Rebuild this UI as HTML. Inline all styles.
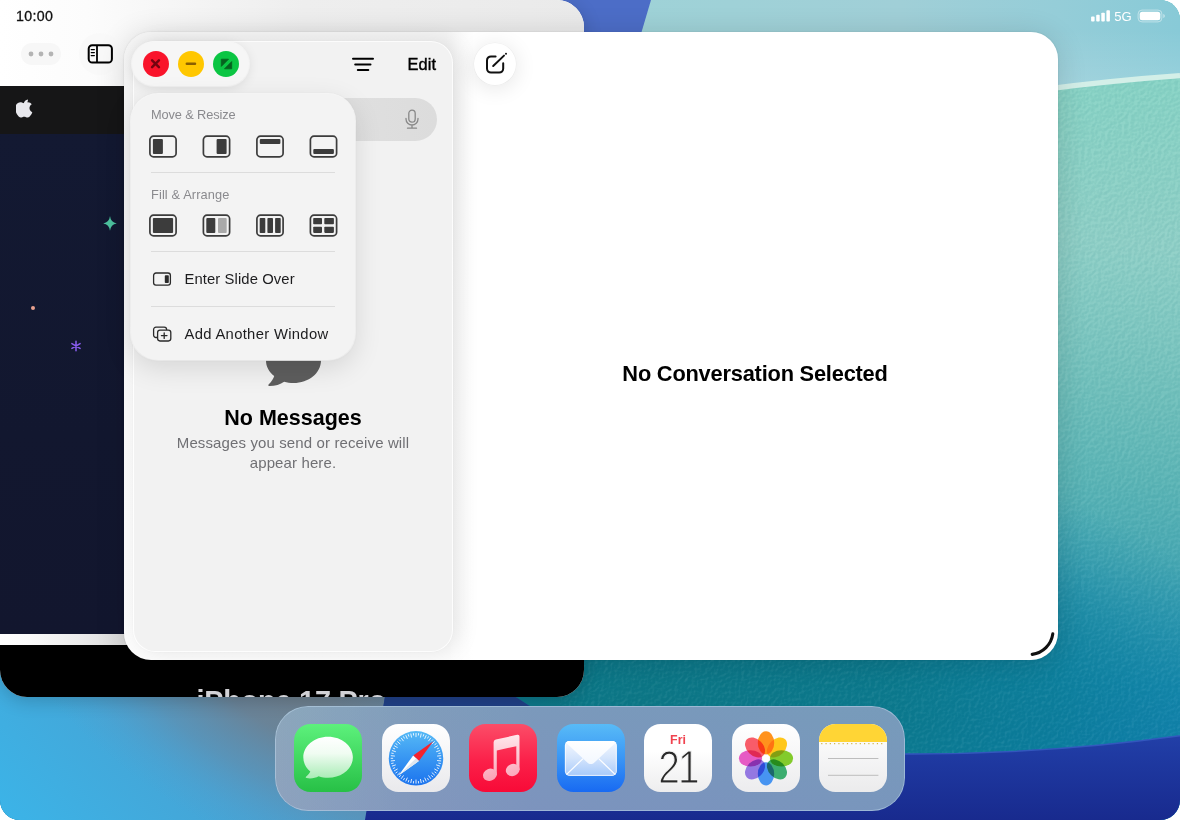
<!DOCTYPE html>
<html lang="en">
<head>
<meta charset="utf-8">
<title>iPad Window Controls</title>
<style>
*{box-sizing:border-box;margin:0;padding:0}
html,body{width:1180px;height:820px;overflow:hidden;background:#fff;font-family:"Liberation Sans",sans-serif;color:#000}
#screen{position:absolute;left:0;top:0;width:1180px;height:820px;overflow:hidden;border-radius:0 20px 20px 20px;background:#3a9fcf}
#wall{position:absolute;left:0;top:0;width:1180px;height:820px}
.abs{position:absolute}
/* status bar */
#time{position:absolute;left:16px;top:7px;font-size:14.200px;line-height:18px;font-weight:400;letter-spacing:.35px;color:#111;z-index:50;-webkit-text-stroke:.3px #111}
#status{position:absolute;left:1085px;top:0;width:90px;height:30px;z-index:50}
/* back window */
#back{position:absolute;left:0;top:0;width:584px;height:697px;border-radius:0 27px 27px 27px;overflow:hidden;background:#fff;box-shadow:0 4px 18px rgba(0,0,0,.18)}
#back .tb{position:absolute;left:0;top:0;width:584px;height:86px;background:linear-gradient(90deg,#fff 0%,#fcfcfc 15%,#f4f4f4 34%,#eeeeee 52%,#ececec 80%,#eaeaea 100%)}
#back .nav{position:absolute;left:0;top:86px;width:584px;height:48px;background:#161617}
#back .hero{position:absolute;left:0;top:134px;width:584px;height:500px;background:linear-gradient(180deg,#131932 0%,#12172f 60%,#12162e 100%)}
#back .strip{position:absolute;left:0;top:634px;width:584px;height:11px;background:linear-gradient(90deg,#fff 0,#fafafa 30px,#ececec 80px,#dadada 124px)}
#back .black{position:absolute;left:0;top:645px;width:584px;height:60px;background:#000}
#back .iph{position:absolute;left:196.500px;top:683.500px;line-height:34px;font-size:28.800px;font-weight:700;color:#d2d2d6;letter-spacing:-.2px;white-space:nowrap}
.pillbtn{position:absolute;background:#f4f4f4;border-radius:20px}
/* front window */
#front{position:absolute;left:124px;top:32px;width:934px;height:628px;border-radius:27px;background:linear-gradient(90deg,rgba(255,255,255,0) 0,rgba(255,255,255,0) 322px,#fff 350px),linear-gradient(180deg,#f3f3f3 0,#f5f5f5 120px,#fafafa 380px,#fcfcfc 100%);box-shadow:0 3px 30px rgba(0,0,0,.14),0 0 2px rgba(0,0,0,.12);z-index:10}
#side{position:absolute;left:10px;top:10px;width:318px;height:609px;border-radius:21px;background:#f2f2f2;box-shadow:0 0 0 1px rgba(255,255,255,.9),6px 0 22px rgba(0,0,0,.10),0 0 3px rgba(0,0,0,.06)}
#search{position:absolute;left:30px;top:55.500px;width:273px;height:43px;border-radius:21.500px;background:linear-gradient(90deg,#e6e6e6,#dcdcdc)}
#edit{position:absolute;left:273.500px;top:12px;font-size:16.400px;line-height:20px;font-weight:400;-webkit-text-stroke:.38px #000;color:#000;letter-spacing:.1px}
#nomsg{position:absolute;left:0;top:364px;line-height:24px;width:318px;text-align:center;font-size:21.500px;font-weight:700;color:#000;letter-spacing:0}
#sub{position:absolute;left:19px;top:391px;width:280px;text-align:center;font-size:15px;line-height:20px;color:#707074;letter-spacing:.12px}
#nosel{position:absolute;left:331px;top:329px;line-height:26px;width:600px;text-align:center;font-size:21.800px;font-weight:700;color:#000;letter-spacing:-.2px}
#compose{position:absolute;left:350px;top:11px;width:42px;height:42px;border-radius:21px;background:#fff;box-shadow:0 3px 22px rgba(0,0,0,.11),0 0 0 .5px rgba(0,0,0,.04)}
/* traffic lights + menu */
#lights{position:absolute;left:132px;top:42px;width:117px;height:44px;border-radius:22px;background:#f6f6f6;box-shadow:0 2px 12px rgba(0,0,0,.10),0 0 0 1px rgba(255,255,255,.8);z-index:30}
#lights i{position:absolute;top:8.800px;width:26px;height:26px;border-radius:50%}
#menu{position:absolute;left:131px;top:94px;width:224px;height:266px;border-radius:27px;background:#f3f3f3;box-shadow:0 8px 28px rgba(0,0,0,.12),0 0 0 1px rgba(255,255,255,.85),0 0 3px rgba(0,0,0,.08);z-index:30}
#menu .lab{position:absolute;left:20px;line-height:16px;font-size:12.800px;color:#8a8a8e;letter-spacing:-.2px;white-space:nowrap}
#menu .div{position:absolute;left:20px;width:184px;height:1px;background:#dcdcdc}
#menu .item{position:absolute;left:53.500px;line-height:20px;font-size:14.8px;color:#1c1c1e;letter-spacing:.1px;white-space:nowrap}
#menu svg.ic{position:absolute}
/* dock */
#dock{position:absolute;left:274.500px;top:705.500px;width:630.500px;height:105.500px;border-radius:33px;background:linear-gradient(180deg,rgba(116,162,184,.28) 0%,rgba(121,142,192,.28) 100%),linear-gradient(90deg,#95a9bd 0%,#8ea4be 10%,#859bbd 22%,#7e96bd 40%,#7a96bc 70%,#7999bb 100%);box-shadow:inset 0 0 0 1px rgba(200,225,245,.45);z-index:20}
.app{position:absolute;top:18.700px;width:68px;height:68px;border-radius:16.5px;overflow:hidden}
</style>
</head>
<body>
<div id="screen">
<svg id="wall" viewBox="0 0 1180 820">
  <defs>
    <linearGradient id="gTeal" gradientUnits="userSpaceOnUse" x1="1150" y1="80" x2="1090" y2="740">
      <stop offset="0" stop-color="#89d4c6"/>
      <stop offset=".12" stop-color="#8cd2c6"/>
      <stop offset=".25" stop-color="#90d0c7"/>
      <stop offset=".36" stop-color="#82c9c2"/>
      <stop offset=".485" stop-color="#6fbfbb"/>
      <stop offset=".605" stop-color="#5cb5b6"/>
      <stop offset=".727" stop-color="#47a8b3"/>
      <stop offset=".82" stop-color="#2e98b0"/>
      <stop offset=".91" stop-color="#1688ad"/>
      <stop offset="1" stop-color="#117eab"/>
    </linearGradient>
    <radialGradient id="gTealDark" gradientUnits="userSpaceOnUse" cx="640" cy="700" r="640" gradientTransform="translate(640 700) scale(1 .42) translate(-640 -700)">
      <stop offset="0" stop-color="#0d7786" stop-opacity="1"/>
      <stop offset=".4" stop-color="#0c798c" stop-opacity=".95"/>
      <stop offset=".65" stop-color="#0a7c96" stop-opacity=".7"/>
      <stop offset=".85" stop-color="#0c80a2" stop-opacity=".25"/>
      <stop offset="1" stop-color="#0f84aa" stop-opacity="0"/>
    </radialGradient>
    <linearGradient id="gSky" x1="0" y1="0" x2="1" y2="0">
      <stop offset="0" stop-color="#9ed3d7"/>
      <stop offset=".55" stop-color="#a0cfd7"/>
      <stop offset=".8" stop-color="#95cdd8"/>
      <stop offset="1" stop-color="#88cad7"/>
    </linearGradient>
    <linearGradient id="gSkyV" gradientUnits="userSpaceOnUse" x1="0" y1="30" x2="0" y2="88"><stop offset="0" stop-color="#fff" stop-opacity="0"/><stop offset="1" stop-color="#fff" stop-opacity=".14"/></linearGradient>
    <linearGradient id="gLeft" gradientUnits="userSpaceOnUse" x1="0" y1="820" x2="200" y2="640">
      <stop offset="0" stop-color="#3bb4e8"/>
      <stop offset=".5" stop-color="#43a8da"/>
      <stop offset="1" stop-color="#4c9ccc"/>
    </linearGradient>
    <radialGradient id="gShade" gradientUnits="userSpaceOnUse" cx="290" cy="680" r="330" gradientTransform="translate(290 680) rotate(28) scale(1 .5) translate(-290 -680)">
      <stop offset="0" stop-color="#6f7f8c" stop-opacity="1"/>
      <stop offset=".3" stop-color="#6b8295" stop-opacity=".95"/>
      <stop offset=".6" stop-color="#648ba8" stop-opacity=".6"/>
      <stop offset=".85" stop-color="#5b97c0" stop-opacity=".2"/>
      <stop offset="1" stop-color="#5a9cc8" stop-opacity="0"/>
    </radialGradient>
    <linearGradient id="gNavy" x1="0" y1="0" x2="0" y2="1">
      <stop offset="0" stop-color="#2a4db6"/>
      <stop offset=".5" stop-color="#1f3aa2"/>
      <stop offset="1" stop-color="#182a8e"/>
    </linearGradient>
    <linearGradient id="gBand" x1="0" y1="0" x2="0" y2="1">
      <stop offset="0" stop-color="#4b6ac8"/>
      <stop offset="1" stop-color="#1f3f86"/>
    </linearGradient>
    <filter id="grain" x="0" y="0" width="100%" height="100%">
      <feTurbulence type="fractalNoise" baseFrequency=".3" numOctaves="2" seed="4" result="n"/>
      <feDiffuseLighting in="n" surfaceScale="1.100" diffuseConstant="1" lighting-color="#fff" result="l"><feDistantLight azimuth="225" elevation="58"/></feDiffuseLighting>
      <feColorMatrix in="l" type="matrix" values="0 0 0 0 1  0 0 0 0 1  0 0 0 0 1  -1.600 0 0 0 1.420"/>
    </filter>
    <filter id="grainD" x="0" y="0" width="100%" height="100%">
      <feTurbulence type="fractalNoise" baseFrequency=".3" numOctaves="2" seed="4" result="n"/>
      <feDiffuseLighting in="n" surfaceScale="1.100" diffuseConstant="1" lighting-color="#fff" result="l"><feDistantLight azimuth="225" elevation="58"/></feDiffuseLighting>
      <feColorMatrix in="l" type="matrix" values="0 0 0 0 0  0 0 0 0 0.100  0 0 0 0 0.150  1.600 0 0 0 -1.240"/>
    </filter>
  </defs>
  <rect width="1180" height="820" fill="url(#gTeal)"/>
  <rect x="0" y="400" width="1180" height="420" fill="url(#gTealDark)"/>
  <!-- paper texture on teal area -->
  <rect x="560" y="60" width="620" height="700" filter="url(#grain)" opacity=".13"/>
  <rect x="560" y="60" width="620" height="700" filter="url(#grainD)" opacity=".2"/>
  <!-- lower-left blue -->
  <path d="M0 600H400V820H0Z" fill="url(#gLeft)"/>
  <path d="M0 600H400V820H0Z" fill="url(#gShade)"/>
  <!-- sky -->
  <path d="M560 0H1180V75.700Q1112 80.500 1040 89.900L560 120Z" fill="url(#gSky)"/>
  <path d="M1040 30H1180V75.700Q1112 80.500 1040 89.900Z" fill="url(#gSkyV)"/>
  <path d="M1040 89.900Q1112 80.500 1180 75.700" stroke="#d3efe8" stroke-width="5.200" fill="none"/>
  <!-- blue band -->
  <path d="M560 0H651L638 44H560Z" fill="#4c6dc7"/>
  <!-- navy bottom -->
  <path d="M365 820L386 690H505L545 716Q700 762 905 753.400Q1045 754 1180 735.300V820Z" fill="url(#gNavy)"/>
  <path d="M378 740L386 690H505L545 716V740Z" fill="#1f3f82" opacity=".9"/>
  <path d="M905 753.900Q1045 754.500 1180 735.800" stroke="#3b62c8" stroke-width="1.500" fill="none" opacity=".7"/>
</svg>

<!-- ===== back window (Safari / Apple site) ===== -->
<div id="back">
  <div class="tb"></div>
  <div class="nav"></div>
  <div class="hero"></div>
  <div class="strip"></div>
  <div class="black"></div>
  <div class="iph">iPhone 17 Pro</div>
  <!-- ellipsis pill -->
  <div class="pillbtn" style="left:21px;top:43px;width:40px;height:22px;border-radius:11px;background:#f7f7f7"></div>
  <svg class="abs" style="left:21px;top:43px" width="40" height="22" viewBox="0 0 40 22"><circle cx="10" cy="11" r="2.4" fill="#b4b4b4"/><circle cx="20" cy="11" r="2.4" fill="#b4b4b4"/><circle cx="30" cy="11" r="2.4" fill="#b4b4b4"/></svg>
  <!-- sidebar button -->
  <div class="pillbtn" style="left:79px;top:33px;width:42px;height:42px;border-radius:21px;background:#f9f9f9"></div>
  <svg class="abs" style="left:86px;top:42px" width="28" height="24" viewBox="0 0 28 24"><rect x="2.7" y="3.2" width="23.2" height="17.4" rx="3.6" fill="none" stroke="#000" stroke-width="2"/><path d="M11 3.2V20.6" stroke="#000" stroke-width="1.8"/><path d="M5.2 7.6H8.4M5.2 10.6H8.4M5.2 13.6H8.4" stroke="#000" stroke-width="1.2" stroke-linecap="round"/></svg>
  <!-- apple logo -->
  <svg class="abs" style="left:16px;top:98.5px" width="18" height="22" viewBox="0 0 170 200"><path fill="#e8e8ed" d="M150.4 130.3c-2.8 6.5-6.2 12.500-10.200 18-5.400 7.600-9.800 12.900-13.200 15.800-5.200 4.800-10.900 7.300-16.900 7.400-4.300 0-9.600-1.200-15.700-3.700-6.100-2.500-11.800-3.700-16.900-3.700-5.400 0-11.200 1.200-17.400 3.700-6.200 2.500-11.200 3.800-15 3.900-5.800.2-11.600-2.300-17.300-7.600-3.700-3.200-8.300-8.700-13.800-16.500-5.900-8.300-10.800-18-14.600-29-4.100-11.900-6.100-23.400-6.100-34.500 0-12.800 2.800-23.800 8.300-33 4.300-7.400 10.100-13.300 17.300-17.600 7.200-4.300 15-6.500 23.400-6.600 4.600 0 10.600 1.400 18.100 4.200 7.500 2.800 12.300 4.200 14.400 4.200 1.600 0 6.900-1.700 16-5 8.600-3.100 15.800-4.400 21.800-3.900 16.100 1.300 28.200 7.600 36.200 19.100-14.400 8.700-21.500 20.900-21.400 36.600.1 12.200 4.600 22.300 13.200 30.400 3.900 3.700 8.300 6.600 13.200 8.600-1.100 3.100-2.200 6-3.400 8.900zM113.500 3.900c0 9.600-3.500 18.500-10.500 26.800-8.400 9.900-18.600 15.600-29.700 14.700-.1-1.100-.2-2.400-.2-3.600 0-9.200 4-19 11.100-27.100 3.500-4.100 8-7.500 13.500-10.200C103.100 1.900 108.300.4 113.300.1c.1 1.300.2 2.600.2 3.800z"/></svg>
  <!-- stars -->
  <svg class="abs" style="left:101.800px;top:215px" width="16" height="17" viewBox="0 0 16 17"><path d="M8 1Q8.700 7.400 14.800 8.400Q8.700 9.400 8 15.800Q7.300 9.400 1.200 8.400Q7.300 7.400 8 1Z" fill="#4ec4a1"/></svg>
  <div class="abs" style="left:30.700px;top:305.600px;width:4.400px;height:4.400px;border-radius:2.200px;background:#e9a18f"></div>
  <svg class="abs" style="left:70.300px;top:339.900px" width="12" height="12" viewBox="0 0 12 12"><path d="M6 1.300V10.700M1.900 3.650L10.100 8.350M1.900 8.350L10.100 3.650" stroke="#8a5df0" stroke-width="1.500" stroke-linecap="round"/></svg>
</div>

<!-- ===== front window (Messages) ===== -->
<div id="front">
  <div id="side">
    <!-- filter icon -->
    <svg class="abs" style="left:216px;top:11px" width="26" height="22" viewBox="0 0 26 22"><path d="M3 5.800H23M5.200 11.400H20.500M7.800 17H18.300" stroke="#000" stroke-width="2" stroke-linecap="round"/></svg>
    <div id="edit">Edit</div>
    <div id="search"></div>
    <!-- mic -->
    <svg class="abs" style="left:268px;top:66px" width="20" height="22" viewBox="0 0 20 22"><rect x="6.800" y="2.200" width="6.400" height="12" rx="3.200" fill="none" stroke="#888" stroke-width="1.300"/><path d="M4 10.400v.6a6 6 0 0 0 12 0v-.6M10 17v3M5.500 20.200h9" fill="none" stroke="#888" stroke-width="1.300" stroke-linecap="round"/></svg>
    <!-- bubble -->
    <svg class="abs" style="left:130px;top:294px" width="58" height="52" viewBox="0 0 58 52"><path d="M29.500 2C44.700 2 57 11.800 57 24.500S44.700 47 29.500 47c-3.300 0-6.500-.5-9.400-1.300C16.500 48.500 11 50 5.500 50c-1.200 0-1.500-1-.7-1.800C7.600 45.600 9.500 42.500 10.200 40 5 36 2 30.600 2 24.500 2 11.800 14.300 2 29.500 2Z" fill="#5e5e5e"/></svg>
    <div id="nomsg">No Messages</div>
    <div id="sub">Messages you send or receive will appear here.</div>
  </div>
  <div id="compose">
    <svg class="abs" style="left:8px;top:7px" width="28" height="28" viewBox="0 0 28 28"><path d="M13.600 6.400H9A4 4 0 0 0 5 10.400V18.600A4 4 0 0 0 9 22.600H17.200A4 4 0 0 0 21.200 18.600V13.200" fill="none" stroke="#111" stroke-width="2" stroke-linecap="round"/><path d="M11.200 16L22 5.600" stroke="#111" stroke-width="2" stroke-linecap="round"/><circle cx="24" cy="3.700" r="1" fill="#111"/></svg>
  </div>
  <div id="nosel">No Conversation Selected</div>
  <!-- resize handle -->
  <svg class="abs" style="left:900px;top:596px" width="34" height="32" viewBox="0 0 34 32"><path d="M8.200 26.400A24 24 0 0 0 28.800 5.900" fill="none" stroke="#111" stroke-width="3.100" stroke-linecap="round"/></svg>
</div>

<!-- ===== traffic lights ===== -->
<div id="lights">
  <i style="left:10.500px;background:#f9142b"></i>
  <i style="left:45.800px;background:#ffc700"></i>
  <i style="left:81.400px;background:#0bc543"></i>
  <svg class="abs" style="left:0;top:0" width="117" height="44" viewBox="0 0 117 44">
    <path d="M20.100 18.400l6.800 6.800M26.900 18.400l-6.800 6.800" stroke="#740410" stroke-width="2.500" stroke-linecap="round"/>
    <path d="M54.800 21.800h8.200" stroke="#8a5f00" stroke-width="2.500" stroke-linecap="round"/>
    <path d="M89.300 17.200h7.200l-7.200 7.200zM99.700 26.800h-7.200l7.200-7.200z" fill="#06621f" stroke="#06621f" stroke-width=".8" stroke-linejoin="round"/>
  </svg>
</div>

<!-- ===== window menu ===== -->
<div id="menu">
  <div class="lab" style="top:13.400px;letter-spacing:-.12px">Move &amp; Resize</div>
  <svg class="ic" style="left:17px;top:40px" width="190" height="26" viewBox="0 0 190 26">
    <g fill="none" stroke="#3c3c3c" stroke-width="1.700">
      <rect x="1.900" y="2.200" width="26.200" height="20.600" rx="3.600"/>
      <rect x="55.400" y="2.200" width="26.200" height="20.600" rx="3.600"/>
      <rect x="108.900" y="2.200" width="26.200" height="20.600" rx="3.600"/>
      <rect x="162.400" y="2.200" width="26.200" height="20.600" rx="3.600"/>
    </g>
    <g fill="#3c3c3c">
      <rect x="4.900" y="5" width="10" height="15" rx="1"/>
      <rect x="68.600" y="5" width="10" height="15" rx="1"/>
      <rect x="111.800" y="5" width="20.600" height="5" rx="1"/>
      <rect x="165.300" y="15" width="20.600" height="5" rx="1"/>
    </g>
  </svg>
  <div class="div" style="top:78px"></div>
  <div class="lab" style="top:92.700px;letter-spacing:.12px">Fill &amp; Arrange</div>
  <svg class="ic" style="left:17px;top:119px" width="190" height="26" viewBox="0 0 190 26">
    <g fill="none" stroke="#3c3c3c" stroke-width="1.700">
      <rect x="1.900" y="2.200" width="26.200" height="20.600" rx="3.600"/>
      <rect x="55.400" y="2.200" width="26.200" height="20.600" rx="3.600"/>
      <rect x="108.900" y="2.200" width="26.200" height="20.600" rx="3.600"/>
      <rect x="162.400" y="2.200" width="26.200" height="20.600" rx="3.600"/>
    </g>
    <g fill="#3c3c3c">
      <rect x="4.900" y="5" width="20.200" height="15" rx="1"/>
      <rect x="58.300" y="5" width="9" height="15" rx="1"/>
      <rect x="70" y="5" width="8.700" height="15" rx="1" fill="#a9a9a9"/>
      <rect x="111.700" y="5" width="5.600" height="15" rx=".8"/>
      <rect x="119.400" y="5" width="5.600" height="15" rx=".8"/>
      <rect x="127.100" y="5" width="5.600" height="15" rx=".8"/>
      <rect x="165.200" y="5" width="8.800" height="6.200" rx=".8"/>
      <rect x="176.300" y="5" width="9.600" height="6.200" rx=".8"/>
      <rect x="165.200" y="13.700" width="8.800" height="6.200" rx=".8"/>
      <rect x="176.300" y="13.700" width="9.600" height="6.200" rx=".8"/>
    </g>
  </svg>
  <div class="div" style="top:157px"></div>
  <svg class="ic" style="left:20px;top:176px" width="22" height="18" viewBox="0 0 22 18"><rect x="2.600" y="3" width="16.800" height="12.200" rx="2.400" fill="none" stroke="#2a2a2a" stroke-width="1.300"/><rect x="13.800" y="5.200" width="4" height="7.800" rx=".8" fill="#2a2a2a"/></svg>
  <div class="item" style="top:174.900px">Enter Slide Over</div>
  <div class="div" style="top:212px"></div>
  <svg class="ic" style="left:20px;top:230px" width="22" height="20" viewBox="0 0 22 20"><path d="M6.200 13.500H5A2.400 2.400 0 0 1 2.600 11.100V5.600A2.400 2.400 0 0 1 5 3.200H13.200A2.400 2.400 0 0 1 15.600 5.600V6" fill="none" stroke="#2a2a2a" stroke-width="1.300"/><rect x="6.600" y="6.200" width="13.200" height="10.800" rx="2.400" fill="none" stroke="#2a2a2a" stroke-width="1.300"/><path d="M13.200 8.800v5.600M10.400 11.600H16" stroke="#2a2a2a" stroke-width="1.300" stroke-linecap="round"/></svg>
  <div class="item" style="top:230.200px;letter-spacing:.32px">Add Another Window</div>
</div>

<!-- ===== status bar ===== -->
<div id="time">10:00</div>
<svg id="status" viewBox="1085 0 90 30">
  <g fill="#fff">
    <rect x="1091.100" y="16.600" width="3.500" height="4.800" rx=".9"/>
    <rect x="1096.200" y="14.800" width="3.500" height="6.600" rx=".9"/>
    <rect x="1101.300" y="12.700" width="3.500" height="8.700" rx=".9"/>
    <rect x="1106.400" y="10.200" width="3.500" height="11.200" rx=".9"/>
  </g>
  <text x="1114.300" y="20.900" font-family="Liberation Sans, sans-serif" font-size="13.100" fill="#fff">5G</text>
  <rect x="1138.100" y="10.100" width="23.800" height="11.800" rx="3.900" fill="none" stroke="#fff" stroke-opacity=".45" stroke-width="1"/>
  <rect x="1139.700" y="11.700" width="20.600" height="8.600" rx="2.500" fill="#fff"/>
  <path d="M1163.300 14v4c.9-.3 1.500-1.100 1.500-2s-.6-1.700-1.500-2z" fill="#fff" fill-opacity=".5"/>
</svg>

<!-- ===== dock ===== -->
<div id="dock">
  <!-- Messages -->
  <div class="app" style="left:19.500px"><svg width="68" height="68" viewBox="0 0 68 68"><defs><linearGradient id="mg" x1="0" y1="0" x2="0" y2="1"><stop offset="0" stop-color="#5df17c"/><stop offset="1" stop-color="#27c046"/></linearGradient><linearGradient id="mb" x1="0" y1="0" x2="0" y2="1"><stop offset="0" stop-color="#fff"/><stop offset=".4" stop-color="#f0fcf2"/><stop offset="1" stop-color="#a9ecb6"/></linearGradient></defs><rect width="68" height="68" fill="url(#mg)"/><path d="M34.100 12.800C47.800 12.800 58.900 22 58.900 33.300S47.800 53.800 34.100 53.800C30.700 53.800 27.500 53.300 24.600 52.300 21.400 54.200 16.800 54.800 12.600 54.100 11.500 53.900 11.400 53.100 12.200 52.500 14.200 51 15.600 49.400 16.300 47.600 11.900 43.900 9.300 38.900 9.300 33.300 9.300 22 20.400 12.800 34.100 12.800Z" fill="url(#mb)"/></svg></div>
  <!-- Safari -->
  <div class="app" style="left:107px"><svg width="68" height="68" viewBox="0 0 68 68"><defs><linearGradient id="sg" x1="0" y1="0" x2="0" y2="1"><stop offset="0" stop-color="#fff"/><stop offset="1" stop-color="#e9e9ec"/></linearGradient><linearGradient id="sb" x1="0" y1="0" x2="0" y2="1"><stop offset="0" stop-color="#55b9f6"/><stop offset="1" stop-color="#1b73ee"/></linearGradient></defs><rect width="68" height="68" fill="url(#sg)"/><circle cx="34" cy="34.300" r="27.200" fill="url(#sb)"/><path d="M34.00 13.10L34.00 9.00M36.39 11.53L36.64 9.14M38.41 13.56L39.26 9.55M41.08 12.52L41.82 10.24M42.62 14.93L44.29 11.19M45.45 14.47L46.65 12.39M46.46 17.15L48.87 13.83M49.32 17.28L50.93 15.50M49.75 20.11L52.80 17.37M52.53 20.84L54.47 19.43M52.36 23.70L55.91 21.65M54.92 24.99L57.11 24.01M54.16 27.75L58.06 26.48M56.40 29.54L58.75 29.04M55.08 32.08L59.16 31.66M56.90 34.30L59.30 34.30M55.08 36.52L59.16 36.94M56.40 39.06L58.75 39.56M54.16 40.85L58.06 42.12M54.92 43.61L57.11 44.59M52.36 44.90L55.91 46.95M52.53 47.76L54.47 49.17M49.75 48.49L52.80 51.23M49.32 51.32L50.93 53.10M46.46 51.45L48.87 54.77M45.45 54.13L46.65 56.21M42.62 53.67L44.29 57.41M41.08 56.08L41.82 58.36M38.41 55.04L39.26 59.05M36.39 57.07L36.64 59.46M34.00 55.50L34.00 59.60M31.61 57.07L31.36 59.46M29.59 55.04L28.74 59.05M26.92 56.08L26.18 58.36M25.38 53.67L23.71 57.41M22.55 54.13L21.35 56.21M21.54 51.45L19.13 54.77M18.68 51.32L17.07 53.10M18.25 48.49L15.20 51.23M15.47 47.76L13.53 49.17M15.64 44.90L12.09 46.95M13.08 43.61L10.89 44.59M13.84 40.85L9.94 42.12M11.60 39.06L9.25 39.56M12.92 36.52L8.84 36.94M11.10 34.30L8.70 34.30M12.92 32.08L8.84 31.66M11.60 29.54L9.25 29.04M13.84 27.75L9.94 26.48M13.08 24.99L10.89 24.01M15.64 23.70L12.09 21.65M15.47 20.84L13.53 19.43M18.25 20.11L15.20 17.37M18.68 17.28L17.07 15.50M21.54 17.15L19.13 13.83M22.55 14.47L21.35 12.39M25.38 14.93L23.71 11.19M26.92 12.52L26.18 10.24M29.59 13.56L28.74 9.55M31.61 11.53L31.36 9.14" stroke="#fff" stroke-width="1" stroke-opacity=".85"/><path d="M51.300 17.200L31.200 31.400 36.900 37.100Z" fill="#f5222d"/><path d="M16.600 51.400L31.200 31.400 36.900 37.100Z" fill="#fff"/><path d="M16.600 51.400L34 34.300 36.900 37.100Z" fill="#dfe6ef"/></svg></div>
  <!-- Music -->
  <div class="app" style="left:194.500px"><svg width="68" height="68" viewBox="0 0 68 68"><defs><linearGradient id="ug" x1="0" y1="0" x2="0" y2="1"><stop offset="0" stop-color="#fb4d68"/><stop offset=".55" stop-color="#fb2049"/><stop offset="1" stop-color="#f80a37"/></linearGradient><linearGradient id="un" gradientUnits="userSpaceOnUse" x1="0" y1="10" x2="0" y2="58"><stop offset="0" stop-color="#ffe9ed"/><stop offset="1" stop-color="#fba0b4"/></linearGradient></defs><rect width="68" height="68" fill="url(#ug)"/><g fill="url(#un)"><path d="M24.600 18.200Q24.600 16 26.800 15.500L48.200 10.800Q50.500 10.300 50.500 12.600V46H47.300V22.300L27.800 26.400V51H24.600Z"/><ellipse cx="20.900" cy="50.800" rx="7.100" ry="6" transform="rotate(-22 20.900 50.800)"/><ellipse cx="43.700" cy="46" rx="7" ry="6" transform="rotate(-22 43.700 46)"/></g></svg></div>
  <!-- Mail -->
  <div class="app" style="left:282px"><svg width="68" height="68" viewBox="0 0 68 68"><defs><linearGradient id="lg" x1="0" y1="0" x2="0" y2="1"><stop offset="0" stop-color="#58bbf7"/><stop offset=".5" stop-color="#3a96f5"/><stop offset="1" stop-color="#186af2"/></linearGradient><linearGradient id="le" x1="0" y1="0" x2="0" y2="1"><stop offset="0" stop-color="#f4f8ff"/><stop offset=".5" stop-color="#d3e4fc"/><stop offset="1" stop-color="#a6c9fa"/></linearGradient><linearGradient id="lf" x1="0" y1="0" x2="0" y2="1"><stop offset="0" stop-color="#fff"/><stop offset="1" stop-color="#f3f8ff"/></linearGradient></defs><rect width="68" height="68" fill="url(#lg)"/><rect x="7.900" y="17" width="51.900" height="34.900" rx="4.600" fill="url(#le)"/><path d="M9.400 50.600L26 34.600M58.300 50.600L41.700 34.600" stroke="#fff" stroke-width="1.300" stroke-opacity=".95" fill="none"/><rect x="8.400" y="17.500" width="50.900" height="33.900" rx="4.200" fill="none" stroke="#fff" stroke-opacity=".7" stroke-width="1"/><path d="M8.800 18.600C9.600 17.600 10.900 17 12.300 17H55.400C56.800 17 58.100 17.600 58.900 18.600L37.400 38.500C35.300 40.500 32.400 40.500 30.300 38.500Z" fill="url(#lf)"/></svg></div>
  <!-- Calendar -->
  <div class="app" style="left:369.500px;background:linear-gradient(#fff 40%,#ededee)"><div style="position:absolute;left:0;top:9px;width:68px;text-align:center;font-size:12.400px;line-height:14px;font-weight:700;color:#f0434f">Fri</div><div id="cal21" style="position:absolute;left:-16.5px;top:21px;width:100px;text-align:center;font-size:41px;line-height:44px;color:#2a2a2a;-webkit-text-stroke:1.100px #f6f6f6;letter-spacing:-2px;transform:scale(.95,1.13);transform-origin:50% 50%">21</div></div>
  <!-- Photos -->
  <div class="app" style="left:457px"><svg width="68" height="68" viewBox="0 0 68 68"><defs><linearGradient id="pg" x1="0" y1="0" x2="0" y2="1"><stop offset="0" stop-color="#fff"/><stop offset="1" stop-color="#ececee"/></linearGradient></defs><rect width="68" height="68" fill="url(#pg)"/><g style="isolation:isolate" opacity=".93"><ellipse cx="34" cy="18.900" rx="8.200" ry="11.600" fill="#ff8a0c" style="mix-blend-mode:multiply" transform="rotate(0 34 34.400)"/><ellipse cx="34" cy="18.900" rx="8.200" ry="11.600" fill="#ffc30a" style="mix-blend-mode:multiply" transform="rotate(45 34 34.400)"/><ellipse cx="34" cy="18.900" rx="8.200" ry="11.600" fill="#7ac71c" style="mix-blend-mode:multiply" transform="rotate(90 34 34.400)"/><ellipse cx="34" cy="18.900" rx="8.200" ry="11.600" fill="#2fa866" style="mix-blend-mode:multiply" transform="rotate(135 34 34.400)"/><ellipse cx="34" cy="18.900" rx="8.200" ry="11.600" fill="#3b8df2" style="mix-blend-mode:multiply" transform="rotate(180 34 34.400)"/><ellipse cx="34" cy="18.900" rx="8.200" ry="11.600" fill="#8d6fe0" style="mix-blend-mode:multiply" transform="rotate(225 34 34.400)"/><ellipse cx="34" cy="18.900" rx="8.200" ry="11.600" fill="#e54fc0" style="mix-blend-mode:multiply" transform="rotate(270 34 34.400)"/><ellipse cx="34" cy="18.900" rx="8.200" ry="11.600" fill="#f8505e" style="mix-blend-mode:multiply" transform="rotate(315 34 34.400)"/></g><circle cx="34" cy="34.400" r="3.600" fill="#fff"/></svg></div>
  <!-- Notes -->
  <div class="app" style="left:544.500px"><svg width="68" height="68" viewBox="0 0 68 68"><defs><linearGradient id="ng" x1="0" y1="0" x2="0" y2="1"><stop offset="0" stop-color="#fff"/><stop offset="1" stop-color="#ebebec"/></linearGradient></defs><rect width="68" height="68" fill="url(#ng)"/><rect width="68" height="18" fill="#ffd535"/><path d="M2.200 19.700H66" stroke="#c9a51d" stroke-width="1" stroke-dasharray="1.200 3.080"/><path d="M9 34.500H59.400M9 51.300H59.400" stroke="#bdbdbd" stroke-width="1"/></svg></div>
</div>
</div>
</body>
</html>
